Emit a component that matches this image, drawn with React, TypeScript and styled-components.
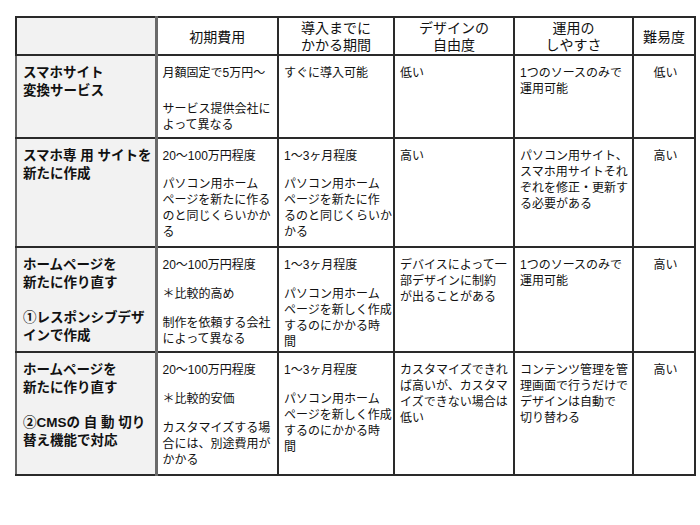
import React, { FC } from "react";
import styled, { createGlobalStyle } from "styled-components";

const Global = createGlobalStyle`
  body {
    margin: 0;
    background: #fff;
    font-family: "Liberation Sans", "Noto Sans CJK JP", sans-serif;
    color: #111;
  }
`;

const Page = styled.div`
  padding: 16px 0 0 15px;
`;

const Table = styled.table`
  border-collapse: collapse;
  table-layout: fixed;
  width: 679px;
  border-top: 2px solid #2a2a2a;
  border-right: 2px solid #2a2a2a;
  border-left: 2px solid #666;
  border-bottom: 2px solid #5a5a5a;
`;

const Row = styled.tr<{ $h: number }>`
  height: ${(p) => p.$h}px;
`;

const HeadCell = styled.th`
  border: 2px solid #2a2a2a;
  font-weight: normal;
  font-size: 14px;
  line-height: 17px;
  text-align: center;
  vertical-align: middle;
  padding: 2px 2px 0;
  white-space: nowrap;
`;

const Corner = styled(HeadCell)`
  background: #f2f2f2;
  border-right: 3px solid #6a6a6a;
`;

const LabelCell = styled.td`
  background: #f2f2f2;
  border: 2px solid #2a2a2a;
  border-right: 3px solid #6a6a6a;
  border-left-color: #666;
  font-weight: bold;
  font-size: 13.5px;
  line-height: 18px;
  vertical-align: top;
  padding: 8px 4px 0 6px;
  white-space: nowrap;
`;

const BodyCell = styled.td<{ $center?: boolean }>`
  border: 2px solid #2a2a2a;
  font-size: 12px;
  line-height: 16px;
  vertical-align: top;
  text-align: ${(p) => (p.$center ? "center" : "left")};
  padding: 9px 2px 0 5px;
  white-space: nowrap;
`;

const Para = styled.p<{ $gap: number }>`
  margin: 0 0 ${(p) => p.$gap}px;
  &:last-child {
    margin-bottom: 0;
  }
`;

type Block = string[][];

interface RowData {
  h: number;
  gap: number;
  label: Block;
  cost: Block;
  period: Block;
  design: Block;
  ops: Block;
  level: string;
}

const rows: RowData[] = [
  {
    h: 83,
    gap: 20,
    label: [["スマホサイト", "変換サービス"]],
    cost: [["月額固定で5万円〜"], ["サービス提供会社に", "よって異なる"]],
    period: [["すぐに導入可能"]],
    design: [["低い"]],
    ops: [["1つのソースのみで", "運用可能"]],
    level: "低い",
  },
  {
    h: 109,
    gap: 12,
    label: [["スマホ専 用 サイトを", "新たに作成"]],
    cost: [["20〜100万円程度"], ["パソコン用ホーム", "ページを新たに作る", "のと同じくらいかか", "る"]],
    period: [["1〜3ヶ月程度"], ["パソコン用ホーム", "ページを新たに作", "るのと同じくらいか", "かる"]],
    design: [["高い"]],
    ops: [["パソコン用サイト、", "スマホ用サイトそれ", "ぞれを修正・更新す", "る必要がある"]],
    level: "高い",
  },
  {
    h: 105,
    gap: 13,
    label: [["ホームページを", "新たに作り直す"], ["①レスポンシブデザ", "インで作成"]],
    cost: [["20〜100万円程度"], ["＊比較的高め"], ["制作を依頼する会社", "によって異なる"]],
    period: [["1〜3ヶ月程度"], ["パソコン用ホーム", "ページを新しく作成", "するのにかかる時", "間"]],
    design: [["デバイスによって一", "部デザインに制約", "が出ることがある"]],
    ops: [["1つのソースのみで", "運用可能"]],
    level: "高い",
  },
  {
    h: 123,
    gap: 13,
    label: [["ホームページを", "新たに作り直す"], ["②CMSの 自 動 切り", "替え機能で対応"]],
    cost: [["20〜100万円程度"], ["＊比較的安価"], ["カスタマイズする場", "合には、別途費用が", "かかる"]],
    period: [["1〜3ヶ月程度"], ["パソコン用ホーム", "ページを新しく作成", "するのにかかる時", "間"]],
    design: [["カスタマイズできれ", "ば高いが、カスタマ", "イズできない場合は", "低い"]],
    ops: [["コンテンツ管理を管", "理画面で行うだけで", "デザインは自動で", "切り替わる"]],
    level: "高い",
  },
];

const Lines: FC<{ block: Block; gap: number }> = ({ block, gap }) => (
  <>
    {block.map((para, i) => (
      <Para key={i} $gap={gap}>
        {para.map((line, j) => (
          <React.Fragment key={j}>
            {j > 0 && <br />}
            {line}
          </React.Fragment>
        ))}
      </Para>
    ))}
  </>
);

const App: FC = () => {
  return (
    <Page>
      <Global />
      <Table>
        <colgroup>
          <col style={{ width: 140 }} />
          <col style={{ width: 122 }} />
          <col style={{ width: 116 }} />
          <col style={{ width: 120 }} />
          <col style={{ width: 119 }} />
          <col style={{ width: 62 }} />
        </colgroup>
        <thead>
          <Row $h={38}>
            <Corner />
            <HeadCell>初期費用</HeadCell>
            <HeadCell>導入までに<br />かかる期間</HeadCell>
            <HeadCell>デザインの<br />自由度</HeadCell>
            <HeadCell>運用の<br />しやすさ</HeadCell>
            <HeadCell>難易度</HeadCell>
          </Row>
        </thead>
        <tbody>
          {rows.map((r, i) => (
            <Row key={i} $h={r.h}>
              <LabelCell><Lines block={r.label} gap={17} /></LabelCell>
              <BodyCell><Lines block={r.cost} gap={r.gap} /></BodyCell>
              <BodyCell><Lines block={r.period} gap={r.gap} /></BodyCell>
              <BodyCell><Lines block={r.design} gap={r.gap} /></BodyCell>
              <BodyCell><Lines block={r.ops} gap={r.gap} /></BodyCell>
              <BodyCell $center>{r.level}</BodyCell>
            </Row>
          ))}
        </tbody>
      </Table>
    </Page>
  );
};

export default App;
